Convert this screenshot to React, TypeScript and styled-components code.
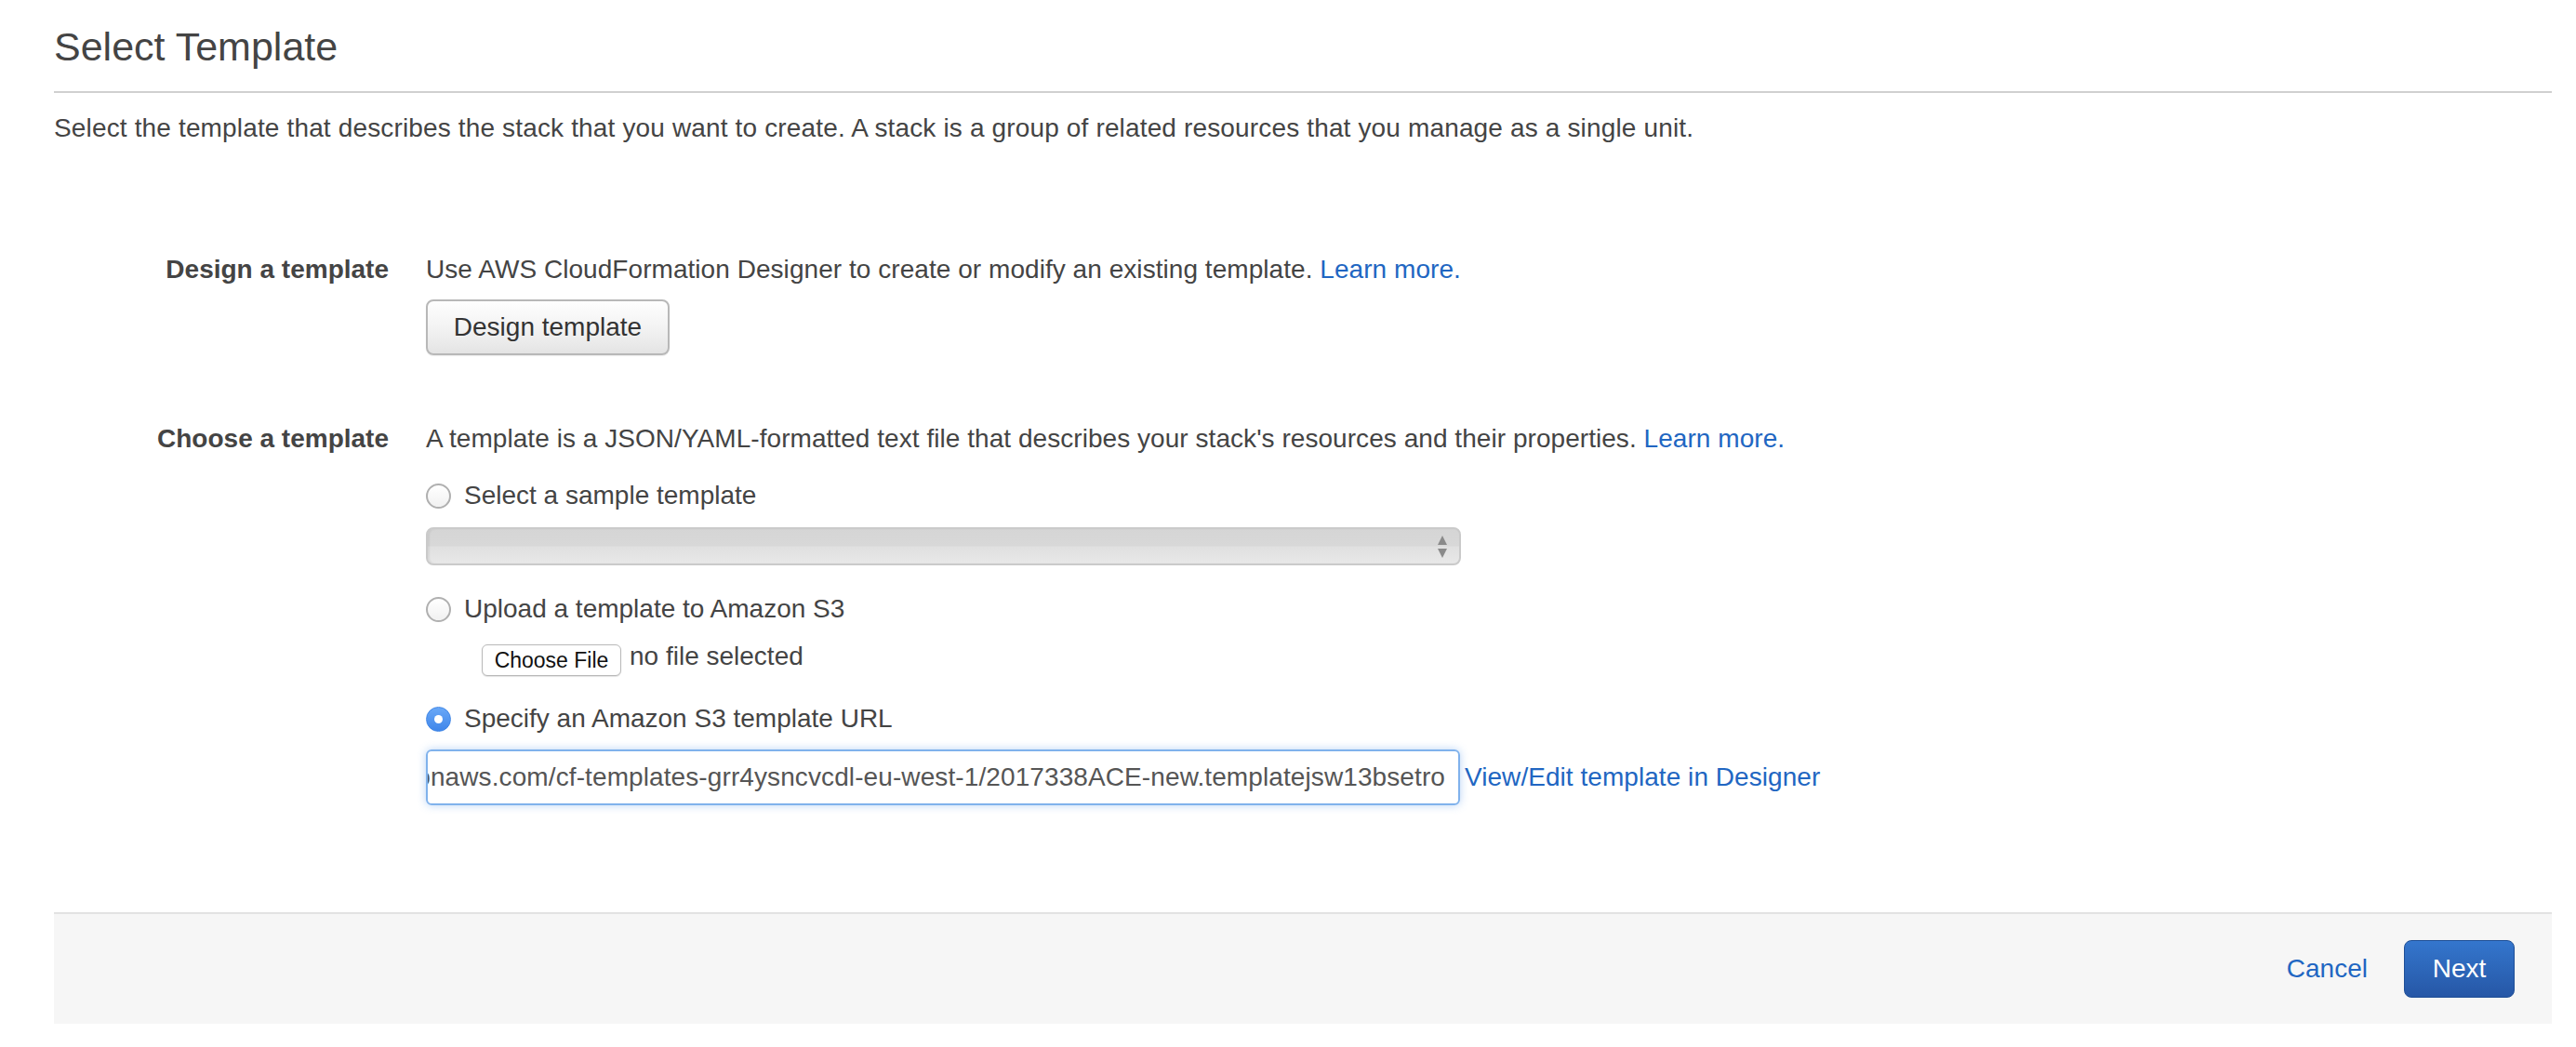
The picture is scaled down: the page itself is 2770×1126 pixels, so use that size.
import React from 'react';
import styled, { createGlobalStyle } from 'styled-components';

const GlobalStyle = createGlobalStyle`
    html, body {
        margin: 0;
        padding: 0;
        background: #ffffff;
    }
    body {
        font-family: "Liberation Sans", Arial, Helvetica, sans-serif;
        color: #444444;
    }
`

const Page = styled.div`
    padding: 0 26px 0 58px;
`

const Header = styled.header`
    padding: 25px 0 23px;
    border-bottom: 2px solid #d0d0d0;
`

const Title = styled.h1`
    margin: 0;
    font-size: 43px;
    line-height: 50px;
    font-weight: normal;
    color: #444444;
`

const Intro = styled.p`
    margin: 18px 0 0;
    font-size: 28px;
    line-height: 40px;
    letter-spacing: 0.15px;
`

const Form = styled.div`
    margin-top: 112px;
    display: grid;
    grid-template-columns: 360px 1fr;
    column-gap: 40px;
    row-gap: 70px;
`

const Label = styled.div`
    font-size: 28px;
    line-height: 40px;
    font-weight: bold;
    text-align: right;
    color: #444444;
`

const Field = styled.div`
    display: flex;
    flex-direction: column;
    align-items: flex-start;
`

const Text = styled.div`
    font-size: 28px;
    line-height: 40px;
    white-space: nowrap;
    letter-spacing: 0.05px;
`

const Link = styled.a`
    color: #2166c2;
    text-decoration: none;
    cursor: pointer;
`

const GreyButton = styled.button`
    margin-top: 12px;
    height: 60px;
    width: 262px;
    border: 2px solid #b8b8b8;
    border-radius: 8px;
    background: linear-gradient(#fefefe, #f3f3f3 50%, #e4e4e4);
    font-family: inherit;
    font-size: 28px;
    color: #333333;
    box-shadow: 0 1px 1px rgba(0, 0, 0, 0.08);
`

const Option = styled.label<{ $top: number }>`
    margin-top: ${p => p.$top}px;
    display: flex;
    align-items: center;
    gap: 14px;
    font-size: 28px;
    line-height: 40px;
    white-space: nowrap;
`

const Radio = styled.span<{ $checked?: boolean }>`
    position: relative;
    box-sizing: border-box;
    width: 27px;
    height: 27px;
    border-radius: 50%;
    border: ${p => (p.$checked ? '1px solid #3f86e6' : '2px solid #b0b0b0')};
    background: ${p => (p.$checked ? 'linear-gradient(#69a8f7, #3f86ea)' : 'linear-gradient(#ffffff, #f1f1f1)')};
    flex-shrink: 0;

    &::after {
        content: '';
        display: ${p => (p.$checked ? 'block' : 'none')};
        position: absolute;
        left: 50%;
        top: 50%;
        width: 9px;
        height: 9px;
        margin: -4.5px 0 0 -4.5px;
        border-radius: 50%;
        background: #ffffff;
    }
`

const Select = styled.div`
    margin-top: 14px;
    box-sizing: border-box;
    width: 1113px;
    height: 41px;
    display: flex;
    align-items: center;
    justify-content: flex-end;
    padding-right: 12px;
    border: 2px solid #cacaca;
    border-radius: 8px;
    background: linear-gradient(#d5d5d5, #d8d8d8 48%, #e0e0e0 52%, #e8e8e8);
    box-shadow: inset 2px 0 2px rgba(0, 0, 0, 0.06);
`

const FileRow = styled.div`
    margin-top: 18px;
    padding-left: 60px;
    height: 34px;
    display: flex;
    align-items: baseline;
    gap: 9px;
`

const FileButton = styled.button`
    box-sizing: border-box;
    height: 34px;
    width: 150px;
    padding: 0;
    border: 1px solid #b9b9b9;
    border-radius: 6px;
    background: #ffffff;
    font-family: inherit;
    font-size: 23px;
    color: #111111;
    box-shadow: 0 1px 1px rgba(0, 0, 0, 0.12);
`

const FileName = styled.span`
    font-size: 28px;
    line-height: 28px;
    white-space: nowrap;
    position: relative;
    top: -3px;
`

const UrlRow = styled.div`
    margin-top: 13px;
    display: flex;
    align-items: center;
    gap: 5px;
`

const UrlInput = styled.div`
    box-sizing: border-box;
    width: 1112px;
    height: 60px;
    padding: 0 14px 0 10px;
    display: flex;
    align-items: center;
    justify-content: flex-end;
    overflow: hidden;
    border: 2px solid #80b2ec;
    border-radius: 6px;
    box-shadow: 0 0 10px rgba(100, 160, 235, 0.45);
    font-size: 28px;
    color: #555555;
    white-space: nowrap;
    letter-spacing: 0.1px;
`

const Footer = styled.footer`
    margin-top: 115px;
    padding: 28px 40px;
    display: flex;
    justify-content: flex-end;
    align-items: center;
    gap: 39px;
    background: #f6f6f6;
    border-top: 2px solid #e2e2e2;
`

const CancelLink = styled(Link)`
    font-size: 28px;
`

const PrimaryButton = styled.button`
    box-sizing: border-box;
    height: 62px;
    width: 119px;
    border: 1px solid #1f4f96;
    border-radius: 8px;
    background: linear-gradient(#3476cd, #2657a6);
    color: #ffffff;
    font-family: inherit;
    font-size: 28px;
`

function SelectArrows() {
    return (
        <svg width="12" height="26" viewBox="0 0 12 26">
            <path d="M6 1 L11 11 L1 11 Z" fill="#8a8a8a" />
            <path d="M1 15 L11 15 L6 25 Z" fill="#8a8a8a" />
        </svg>
    )
}

export default function App() {
    return (
        <Page>
            <GlobalStyle />
            <Header>
                <Title>Select Template</Title>
            </Header>
            <Intro>
                Select the template that describes the stack that you want to create. A stack is a group of related resources that you manage as a single unit.
            </Intro>

            <Form>
                <Label>Design a template</Label>
                <Field>
                    <Text>
                        Use AWS CloudFormation Designer to create or modify an existing template. <Link>Learn more.</Link>
                    </Text>
                    <GreyButton>Design template</GreyButton>
                </Field>

                <Label>Choose a template</Label>
                <Field>
                    <Text>
                        A template is a JSON/YAML-formatted text file that describes your stack's resources and their properties. <Link>Learn more.</Link>
                    </Text>
                    <Option $top={21}>
                        <Radio />
                        Select a sample template
                    </Option>
                    <Select>
                        <SelectArrows />
                    </Select>
                    <Option $top={27}>
                        <Radio />
                        Upload a template to Amazon S3
                    </Option>
                    <FileRow>
                        <FileButton>Choose File</FileButton>
                        <FileName>no file selected</FileName>
                    </FileRow>
                    <Option $top={26}>
                        <Radio $checked />
                        Specify an Amazon S3 template URL
                    </Option>
                    <UrlRow>
                        <UrlInput>
                            https://s3-eu-west-1.amazonaws.com/cf-templates-grr4ysncvcdl-eu-west-1/2017338ACE-new.templatejsw13bsetro
                        </UrlInput>
                        <Text>
                            <Link>View/Edit template in Designer</Link>
                        </Text>
                    </UrlRow>
                </Field>
            </Form>

            <Footer>
                <CancelLink>Cancel</CancelLink>
                <PrimaryButton>Next</PrimaryButton>
            </Footer>
        </Page>
    )
}
